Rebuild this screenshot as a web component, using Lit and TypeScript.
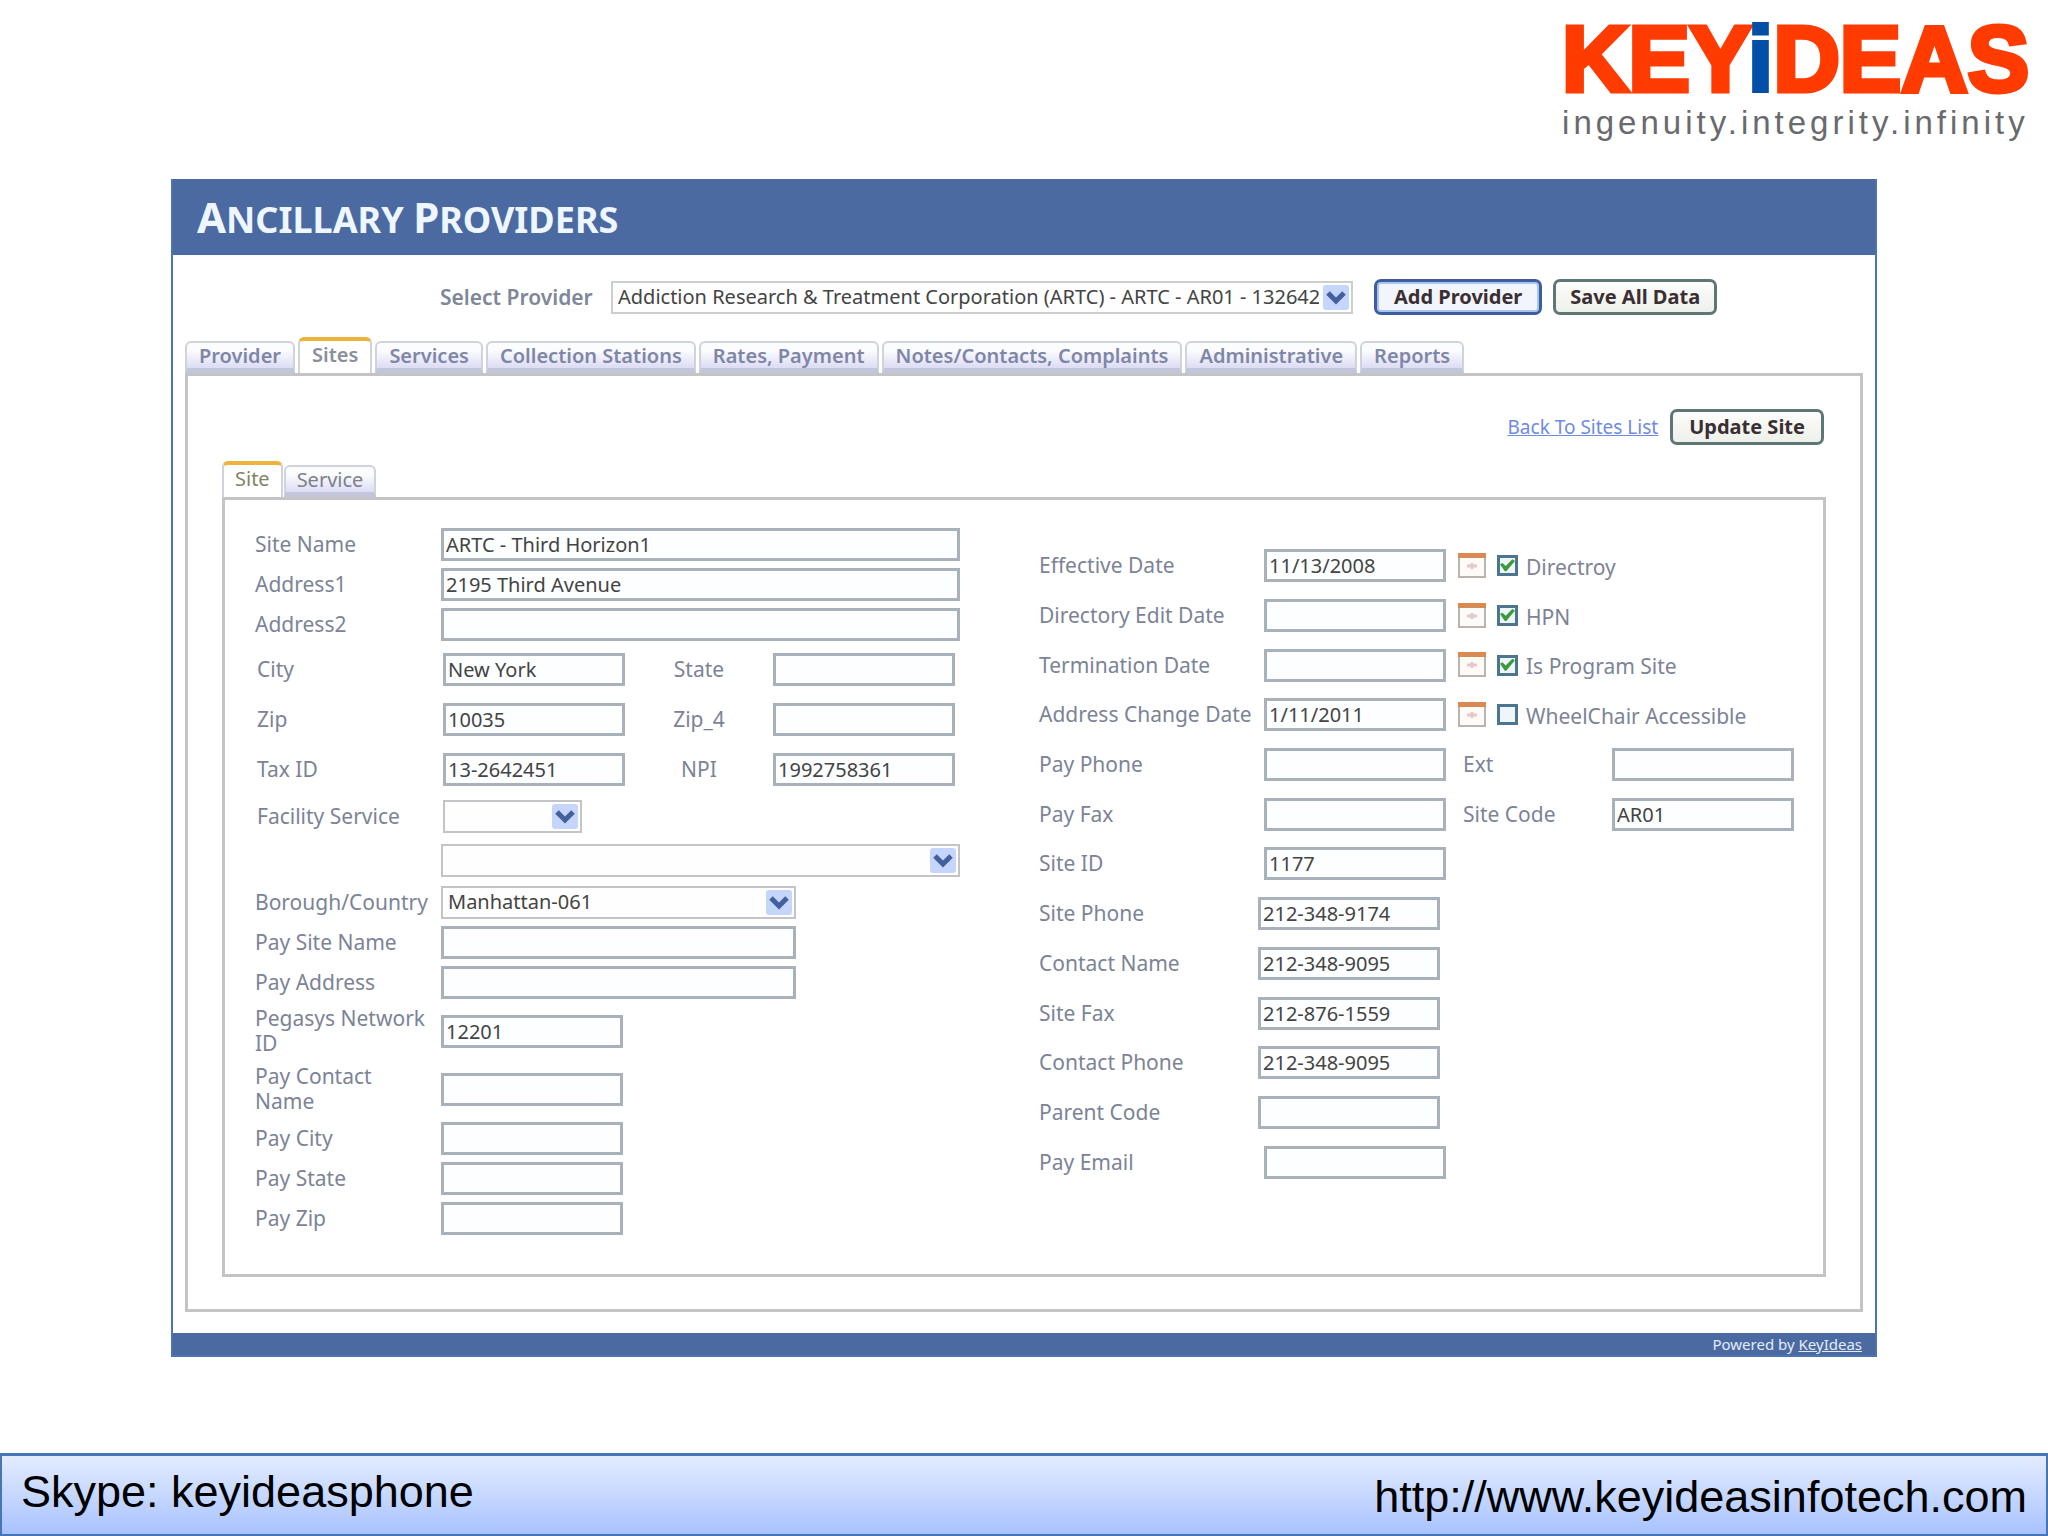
import { LitElement, html, css, nothing, svg } from "lit";
import { customElement, property } from "lit/decorators.js";
import { classMap } from "lit/directives/class-map.js";

const controlStyles = css`
  * {
    box-sizing: border-box;
  }
  label,
  .label {
    color: #7c8397;
    font-size: 21px;
    line-height: 25px;
  }
  input[type="text"] {
    display: block;
    width: 182px;
    max-width: 100%;
    height: 33px;
    margin: 0;
    padding: 0 2px;
    border: 3px solid #a9b1bb;
    border-radius: 0;
    background: #fdfeff;
    color: #444;
    font-family: inherit;
    font-size: 20px;
    line-height: 26px;
  }
`;

@customElement("drop-down")
class DropDown extends LitElement {
  @property() name = "";
  @property() value = "";
  @property() size = "wide";

  static styles = [
    controlStyles,
    css`
      :host {
        display: block;
      }
      .box {
        display: grid;
        align-items: center;
        max-width: 100%;
      }
      .wide {
        width: 519px;
      }
      .medium {
        width: 355px;
      }
      .small {
        width: 139px;
      }
      .header {
        width: 742px;
      }
      select,
      .arrow {
        grid-area: 1 / 1;
      }
      select {
        appearance: none;
        width: 100%;
        height: 33px;
        margin: 0;
        padding: 0 32px 0 5px;
        border: 2px solid #c3c3c9;
        border-radius: 0;
        background: #fefefe;
        color: #444;
        font-family: inherit;
        font-size: 20px;
        line-height: 26px;
      }
      .header select {
        border-color: #ccd0cc;
      }
      .arrow {
        justify-self: end;
        width: 26px;
        height: 25px;
        margin-right: 4px;
        pointer-events: none;
      }
    `,
  ];

  render() {
    return html`
      <div class=${classMap({ box: true, [this.size]: true })}>
        <select aria-label=${this.name}>
          <option>${this.value}</option>
        </select>
        <svg class="arrow" viewBox="0 0 26 25" aria-hidden="true">
          <rect width="26" height="25" rx="3" fill="#c5d5fb" />
          <path d="M5 8 L13 16 L21 8" fill="none" stroke="#42609c" stroke-width="5" />
        </svg>
      </div>
    `;
  }
}

@customElement("tab-strip")
class TabStrip extends LitElement {
  @property({ type: Array }) tabs: string[] = [];
  @property() current = "";
  @property() variant = "main";

  static styles = css`
    :host {
      display: block;
    }
    .strip {
      display: flex;
      align-items: flex-end;
      gap: 3px;
    }
    .tab {
      height: 32px;
      margin: 0;
      padding: 0 12px;
      border: 2px solid #d0d2dc;
      border-bottom: 5px solid #c3c5da;
      border-radius: 6px 6px 0 0;
      background: linear-gradient(#fbfcfd 30%, #dcdcf4);
      color: #7f86a8;
      font-family: inherit;
      font-size: 20px;
      font-weight: 600;
      line-height: 24px;
      white-space: nowrap;
    }
    .current {
      height: 36px;
      padding: 0 12px 4px;
      border-top: 4px solid #ecb43c;
      border-bottom: 0;
      background: #fff;
      color: #8a8f9c;
    }
    .sub {
      gap: 1px;
    }
    .sub .tab {
      padding: 0 11px;
      color: #7c8088;
      font-weight: 400;
    }
    .sub .current {
      padding-bottom: 4px;
      color: #80865f;
    }
  `;

  render() {
    return html`
      <div class=${classMap({ strip: true, sub: this.variant === "sub" })} role="tablist">
        ${this.tabs.map(
          (t) => html`<button
            class=${classMap({ tab: true, current: t === this.current })}
            role="tab"
            aria-selected=${t === this.current ? "true" : "false"}
          >
            ${t}
          </button>`
        )}
      </div>
    `;
  }
}

interface DateRow {
  label: string;
  value: string;
  flag: string;
  checked: boolean;
}

interface TextRow {
  label: string;
  value?: string;
  kind?: string;
  extra?: { label: string; value: string };
}

const idOf = (label: string) => "field-" + label.toLowerCase().replace(/[^a-z0-9]+/g, "-");

@customElement("site-form")
class SiteForm extends LitElement {
  static styles = [
    controlStyles,
    css`
      :host {
        display: block;
      }
      .form {
        display: grid;
        grid-template-columns: 1fr 1fr;
        padding: 24px 0 36px 30px;
      }
      .row {
        display: grid;
        grid-template-columns: 186px 1fr;
        align-items: center;
        min-height: 40px;
      }
      .pair {
        grid-template-columns: 186px 182px 148px 1fr;
        min-height: 50px;
        padding-left: 2px;
      }
      .pair .second {
        text-align: center;
      }
      .service {
        min-height: 44px;
      }
      .inset {
        padding-left: 2px;
      }
      .double {
        min-height: 58px;
      }
      .double label {
        max-width: 180px;
      }
      .row .wide {
        width: 519px;
      }
      .row .medium {
        width: 355px;
      }
      .right {
        display: grid;
        grid-auto-rows: 1fr;
        margin: 17px 0 51px;
      }
      .line {
        display: grid;
        grid-template-columns: 225px 194px 1fr;
        align-items: center;
      }
      .near {
        grid-template-columns: 219px 200px 1fr;
      }
      .tools,
      .flag {
        display: flex;
        align-items: center;
      }
      .tools {
        gap: 11px;
      }
      .flag {
        gap: 8px;
      }
      .flag label {
        padding-top: 3px;
      }
      .extra {
        display: grid;
        grid-template-columns: 149px 1fr;
        align-items: center;
        padding-left: 5px;
      }
      .calendar {
        display: block;
        width: 28px;
        height: 26px;
        margin: 0;
        padding: 0;
        border: 0;
        background: none;
      }
      .calendar svg {
        display: block;
      }
      input[type="checkbox"] {
        display: grid;
        place-items: center;
        appearance: none;
        width: 21px;
        height: 21px;
        margin: 0;
        border: 3px solid #4c7590;
        background: #eef5fb;
      }
      input[type="checkbox"]:checked::before {
        content: "";
        width: 15px;
        height: 13px;
        background: #3d9a3b;
        clip-path: polygon(0 38%, 16% 28%, 38% 52%, 82% 0, 100% 12%, 42% 92%, 32% 92%);
      }
    `,
  ];

  private dates: DateRow[] = [
    { label: "Effective Date", value: "11/13/2008", flag: "Directroy", checked: true },
    { label: "Directory Edit Date", value: "", flag: "HPN", checked: true },
    { label: "Termination Date", value: "", flag: "Is Program Site", checked: true },
    { label: "Address Change Date", value: "1/11/2011", flag: "WheelChair Accessible", checked: false },
  ];

  private contacts: TextRow[] = [
    { label: "Pay Phone", extra: { label: "Ext", value: "" } },
    { label: "Pay Fax", extra: { label: "Site Code", value: "AR01" } },
    { label: "Site ID", value: "1177" },
    { label: "Site Phone", value: "212-348-9174", kind: "near" },
    { label: "Contact Name", value: "212-348-9095", kind: "near" },
    { label: "Site Fax", value: "212-876-1559", kind: "near" },
    { label: "Contact Phone", value: "212-348-9095", kind: "near" },
    { label: "Parent Code", kind: "near" },
    { label: "Pay Email" },
  ];

  private field(label: string, value = "", size = "") {
    return html`<input type="text" id=${idOf(label)} class=${size || nothing} .value=${value} />`;
  }

  private caption(label: string, cls = "") {
    return html`<label class=${cls || nothing} for=${idOf(label)}>${label}</label>`;
  }

  private row(label: string, value = "", size = "", kind = "") {
    return html`<div class=${classMap({ row: true, [kind || "plain"]: true })}>
      ${this.caption(label)}${this.field(label, value, size)}
    </div>`;
  }

  private pair(a: string, av: string, b: string, bv: string) {
    return html`<div class="row pair">
      ${this.caption(a)}${this.field(a, av)}${this.caption(b, "second")}${this.field(b, bv)}
    </div>`;
  }

  private calendarIcon() {
    return svg`<svg width="28" height="26" viewBox="0 0 28 26" aria-hidden="true">
      <rect x="1" y="2" width="26" height="22" fill="#fdfaf8" stroke="#b9b4b0" stroke-width="2" />
      <rect width="28" height="5" fill="#d98a52" />
      <path d="M9 13 H19 M14 10 V16" stroke="#e3c9c9" stroke-width="3" />
    </svg>`;
  }

  render() {
    return html`
      <form class="form">
        <div class="left">
          ${this.row("Site Name", "ARTC - Third Horizon1", "wide")}
          ${this.row("Address1", "2195 Third Avenue", "wide")}
          ${this.row("Address2", "", "wide")}
          ${this.pair("City", "New York", "State", "")}
          ${this.pair("Zip", "10035", "Zip_4", "")}
          ${this.pair("Tax ID", "13-2642451", "NPI", "1992758361")}
          <div class="row service inset">
            <span class="label">Facility Service</span>
            <drop-down name="Facility Service" size="small"></drop-down>
          </div>
          <div class="row service">
            <span></span>
            <drop-down name="Facility Service detail" size="wide"></drop-down>
          </div>
          <div class="row">
            <span class="label">Borough/Country</span>
            <drop-down name="Borough/Country" size="medium" value="Manhattan-061"></drop-down>
          </div>
          ${this.row("Pay Site Name", "", "medium")}
          ${this.row("Pay Address", "", "medium")}
          ${this.row("Pegasys Network ID", "12201", "", "double")}
          ${this.row("Pay Contact Name", "", "", "double")}
          ${this.row("Pay City")} ${this.row("Pay State")} ${this.row("Pay Zip")}
        </div>
        <div class="right">
          ${this.dates.map(
            (d) => html`<div class="line">
              ${this.caption(d.label)}${this.field(d.label, d.value)}
              <div class="tools">
                <button type="button" class="calendar" aria-label="Pick ${d.label}">
                  ${this.calendarIcon()}
                </button>
                <div class="flag">
                  <input type="checkbox" id=${idOf(d.flag)} .checked=${d.checked} />
                  ${this.caption(d.flag)}
                </div>
              </div>
            </div>`
          )}
          ${this.contacts.map(
            (c) => html`<div class=${classMap({ line: true, near: c.kind === "near" })}>
              ${this.caption(c.label)}${this.field(c.label, c.value)}
              ${c.extra
                ? html`<div class="extra">
                    ${this.caption(c.extra.label)}${this.field(c.extra.label, c.extra.value)}
                  </div>`
                : nothing}
            </div>`
          )}
        </div>
      </form>
    `;
  }
}

@customElement("app-root")
class AppRoot extends LitElement {
  static styles = css`
    * {
      box-sizing: border-box;
    }
    :host {
      display: flex;
      flex-direction: column;
      min-height: 100vh;
      background: #fff;
      font-family: "Noto Sans", "Liberation Sans", sans-serif;
    }
    .brand {
      align-self: flex-end;
      padding: 12px 19px 0 0;
      font-family: "Liberation Sans", Arial, sans-serif;
    }
    .logo {
      color: #ff3b00;
      font-size: 92px;
      font-weight: 700;
      line-height: 94px;
      -webkit-text-stroke: 5px #ff3b00;
    }
    .logo .accent {
      color: #034ea6;
      -webkit-text-stroke: 4px #034ea6;
    }
    .tagline {
      color: #6a6a6e;
      font-size: 33px;
      line-height: 34px;
      letter-spacing: 4px;
    }
    .panel {
      margin: 39px 171px 90px;
      border: 2px solid #4c74b0;
      border-top: 0;
      background: #fefffe;
    }
    .title {
      margin: 0;
      padding: 17px 24px 12px;
      background: #4b6aa2;
      color: #eef6ff;
      font-size: 36px;
      font-weight: 700;
      line-height: 46px;
    }
    .cap {
      font-size: 42px;
      line-height: 42px;
    }
    .chooser {
      display: flex;
      align-items: center;
      padding: 24px 0 22px 267px;
    }
    .chooser-label {
      width: 171px;
      color: #7f8799;
      font-size: 21px;
      font-weight: 600;
    }
    .push {
      height: 36px;
      margin: 0;
      padding: 0 14px;
      border: 3px solid #5f7677;
      border-radius: 7px;
      background: linear-gradient(#fdfdfb, #eef0ea);
      color: #3a2f33;
      font-family: inherit;
      font-size: 20px;
      font-weight: 700;
      line-height: 26px;
    }
    .primary {
      margin: 0 11px 0 21px;
      padding: 0 17px;
      border-color: #3c5f9c;
      background: #f2f5fb;
      box-shadow: inset 0 0 0 2px #a9c4f3;
    }
    .tabs {
      padding-left: 12px;
    }
    .sheet {
      margin: 0 12px 21px;
      padding: 33px 34px 32px;
      border: 3px solid #c4c3c5;
    }
    .actions {
      display: flex;
      justify-content: flex-end;
      align-items: center;
      gap: 12px;
      margin: 0 2px 16px 0;
    }
    .back {
      color: #6f8ae0;
      font-size: 19px;
      line-height: 26px;
    }
    .actions .push {
      padding: 0 16px;
    }
    .card {
      border: 3px solid #c4c3c5;
    }
    .powered {
      padding: 0 13px 0 0;
      background: #4b6aa2;
      color: #e4ecfa;
      font-size: 15px;
      line-height: 22px;
      text-align: right;
    }
    .powered a {
      color: inherit;
    }
    .contact {
      display: flex;
      justify-content: space-between;
      align-items: flex-start;
      margin-top: auto;
      padding: 10px 19px 11px;
      border: 2px solid #4677b4;
      border-top-width: 3px;
      background: linear-gradient(#e3ecfe, #c6d8ff 50%, #a9c2ff);
      color: #000;
      font-family: "Liberation Sans", Arial, sans-serif;
      font-size: 45px;
      line-height: 52px;
    }
    .contact a {
      padding-top: 5px;
      color: inherit;
      text-decoration: none;
    }
  `;

  private tabs = [
    "Provider",
    "Sites",
    "Services",
    "Collection Stations",
    "Rates, Payment",
    "Notes/Contacts, Complaints",
    "Administrative",
    "Reports",
  ];

  render() {
    return html`
      <header class="brand">
        <div class="logo">KEY<span class="accent">i</span>DEAS</div>
        <div class="tagline">ingenuity.integrity.infinity</div>
      </header>
      <main class="panel">
        <h1 class="title">
          <span class="cap">A</span>NCILLARY <span class="cap">P</span>ROVIDERS
        </h1>
        <div class="chooser">
          <span class="chooser-label">Select Provider</span>
          <drop-down
            name="Select Provider"
            size="header"
            value="Addiction Research & Treatment Corporation (ARTC) - ARTC - AR01 - 132642451"
          ></drop-down>
          <button class="push primary">Add Provider</button>
          <button class="push">Save All Data</button>
        </div>
        <tab-strip class="tabs" .tabs=${this.tabs} current="Sites"></tab-strip>
        <section class="sheet">
          <div class="actions">
            <a class="back" href="#sites">Back To Sites List</a>
            <button class="push">Update Site</button>
          </div>
          <tab-strip .tabs=${["Site", "Service"]} current="Site" variant="sub"></tab-strip>
          <div class="card"><site-form></site-form></div>
        </section>
        <div class="powered">Powered by <a href="#keyideas">KeyIdeas</a></div>
      </main>
      <footer class="contact">
        <span>Skype: keyideasphone</span>
        <a href="http://www.keyideasinfotech.com">http://www.keyideasinfotech.com</a>
      </footer>
    `;
  }
}
